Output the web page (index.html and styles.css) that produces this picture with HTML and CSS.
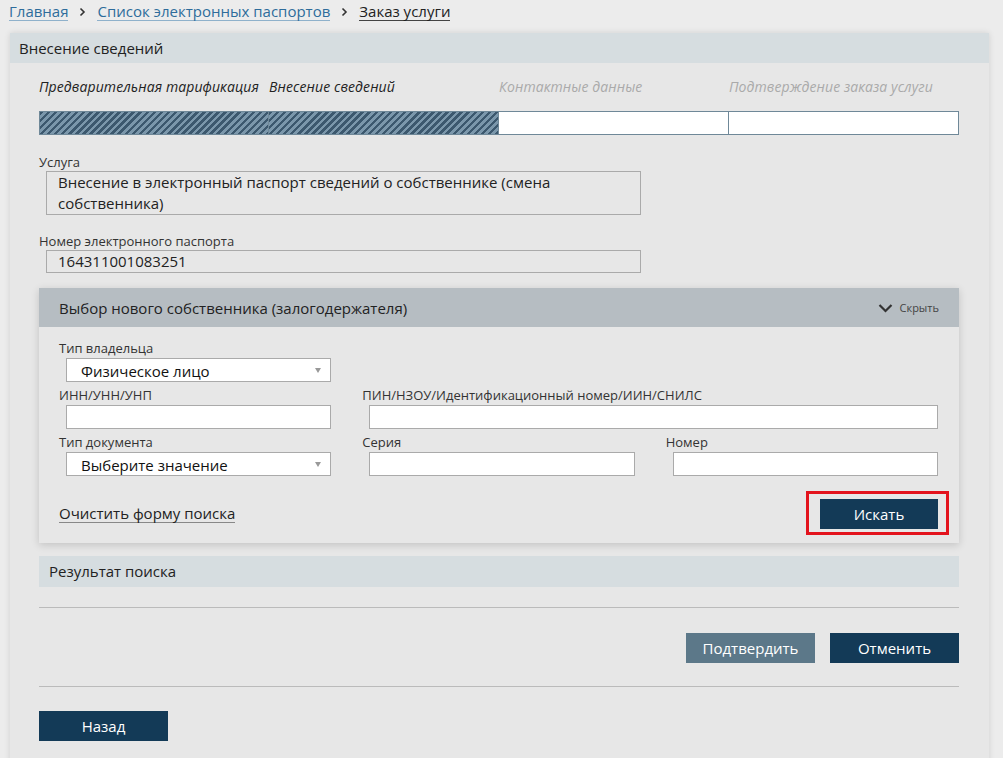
FILE: index.html
```html
<!DOCTYPE html>
<html lang="ru">
<head>
    <meta charset="UTF-8">
    <meta name="viewport" content="width=device-width, initial-scale=1.0">
    <title>Заказ услуги</title>
    <link rel="stylesheet" href="styles.css">
</head>
<body>
    <!-- Breadcrumbs -->
    <div class="breadcrumbs">
        <a href="#" class="crumb-link">Главная</a>
        <svg class="crumb-sep" width="7" height="10" viewBox="0 0 7 10"><path d="M1.5 1.5 L5 5 L1.5 8.5" fill="none" stroke="#333" stroke-width="1.6"/></svg>
        <a href="#" class="crumb-link">Список электронных паспортов</a>
        <svg class="crumb-sep" width="7" height="10" viewBox="0 0 7 10"><path d="M1.5 1.5 L5 5 L1.5 8.5" fill="none" stroke="#333" stroke-width="1.6"/></svg>
        <span class="crumb-current">Заказ услуги</span>
    </div>

    <div class="panel">
        <div class="panel-header">Внесение сведений</div>

        <div class="panel-body">
            <!-- Steps -->
            <div class="steps">
                <div class="step done">
                    <div class="step-label">Предварительная тарификация</div>
                    <div class="step-bar"></div>
                </div>
                <div class="step done">
                    <div class="step-label">Внесение сведений</div>
                    <div class="step-bar"></div>
                </div>
                <div class="step">
                    <div class="step-label">Контактные данные</div>
                    <div class="step-bar"></div>
                </div>
                <div class="step">
                    <div class="step-label">Подтверждение заказа услуги</div>
                    <div class="step-bar"></div>
                </div>
            </div>

            <!-- Readonly fields -->
            <div class="info-field">
                <div class="info-label">Услуга</div>
                <div class="info-value">Внесение в электронный паспорт сведений о собственнике (смена собственника)</div>
            </div>
            <div class="info-field">
                <div class="info-label">Номер электронного паспорта</div>
                <div class="info-value">164311001083251</div>
            </div>

            <!-- Owner search -->
            <div class="subpanel">
                <div class="subpanel-header">
                    <span>Выбор нового собственника (залогодержателя)</span>
                    <a href="#" class="toggle">
                        <svg width="15" height="10" viewBox="0 0 15 10"><path d="M1.5 2 L7.5 8 L13.5 2" fill="none" stroke="#333" stroke-width="2.2"/></svg>
                        Скрыть
                    </a>
                </div>
                <div class="subpanel-body">
                    <div class="form-grid">
                        <div class="field">
                            <label>Тип владельца</label>
                            <div class="select">Физическое лицо<span class="arrow"></span></div>
                        </div>
                        <div class="field spacer"></div>

                        <div class="field">
                            <label>ИНН/УНН/УНП</label>
                            <input type="text">
                        </div>
                        <div class="field wide">
                            <label>ПИН/НЗОУ/Идентификационный номер/ИИН/СНИЛС</label>
                            <input type="text">
                        </div>

                        <div class="field">
                            <label>Тип документа</label>
                            <div class="select">Выберите значение<span class="arrow"></span></div>
                        </div>
                        <div class="field">
                            <label>Серия</label>
                            <input type="text">
                        </div>
                        <div class="field">
                            <label>Номер</label>
                            <input type="text">
                        </div>
                    </div>

                    <div class="search-actions">
                        <a href="#" class="clear-link">Очистить форму поиска</a>
                        <div class="highlight">
                            <button class="btn btn-search">Искать</button>
                        </div>
                    </div>
                </div>
            </div>

            <div class="result-bar">Результат поиска</div>

            <hr class="divider">

            <div class="confirm-row">
                <button class="btn btn-light">Подтвердить</button>
                <button class="btn">Отменить</button>
            </div>

            <hr class="divider">

            <div class="back-row">
                <button class="btn">Назад</button>
            </div>
        </div>
    </div>
</body>
</html>
```

FILE: styles.css
```css
/* Page */
body {
    font-family: 'Open Sans', 'Noto Sans', sans-serif;
    margin: 0;
    background: #ececec;
    color: #222;
    height: 758px;
    overflow: hidden;
}
.breadcrumbs {
    display: flex;
    align-items: center;
    gap: 10px;
    padding-left: 9px;
    height: 24px;
    font-size: 15px;
}
.crumb-link {
    color: #2e6c9b;
    text-decoration: none;
    border-bottom: 1px solid #8fb1cb;
    line-height: 17px;
}
.crumb-current {
    color: #222;
    border-bottom: 1px solid #444;
    line-height: 17px;
}
.crumb-sep {
    margin: 0 1px;
}
.panel {
    margin: 9px 0 0 10px;
    width: 979px;
    background: #e7e7e7;
    box-shadow: 0 0 6px rgba(0, 0, 0, 0.12);
    min-height: 740px;
}
.panel-header {
    background: #d6dde0;
    height: 30px;
    line-height: 30px;
    padding-left: 9px;
    font-size: 15px;
}
.panel-body {
    padding: 0 30px 0 29px;
}

/* Steps */
.steps {
    display: flex;
    padding-top: 15px;
}
.step {
    flex: 1;
}
.step-label {
    font-style: italic;
    font-size: 14px;
    color: #aaa;
    height: 18px;
    line-height: 18px;
    white-space: nowrap;
    letter-spacing: 0.1px;
}
.step.done .step-label {
    color: #222;
}
.step-bar {
    margin-top: 15px;
    height: 22px;
    border: 1px solid #6f8898;
    border-left: none;
    background: #fff;
}
.step:first-child .step-bar {
    border-left: 1px solid #6f8898;
}
.step.done .step-bar {
    background: repeating-linear-gradient(135deg, #3c586e 0, #3c586e 2.5px, #7b97ab 2.5px, #7b97ab 5px);
}

/* Readonly info */
.info-field {
    margin-top: 19px;
}
.info-field + .info-field {
    margin-top: 18px;
}
.info-label {
    font-size: 13px;
    line-height: 17px;
    color: #333;
}
.info-value {
    margin-left: 7px;
    width: 595px;
    box-sizing: border-box;
    border: 1px solid #aaa;
    padding: 0 11px;
    font-size: 15px;
    line-height: 21px;
}

/* Sub panel */
.subpanel {
    margin-top: 15px;
    box-shadow: 0 2px 8px rgba(0, 0, 0, 0.16);
    background: #e7e7e7;
}
.subpanel-header {
    background: #b6bdc2;
    height: 39px;
    display: flex;
    justify-content: space-between;
    align-items: center;
    padding: 0 20px;
    font-size: 15px;
}
.toggle {
    display: flex;
    align-items: center;
    gap: 7px;
    font-size: 11px;
    color: #444;
    text-decoration: none;
}
.subpanel-body {
    padding: 13px 21px 8px 20px;
}
.form-grid {
    display: grid;
    grid-template-columns: 1fr 1fr 1fr;
    column-gap: 31px;
    row-gap: 5px;
}
.field.wide {
    grid-column: span 2;
}
.field.spacer {
    grid-column: span 2;
}
.field label {
    display: block;
    font-size: 13px;
    line-height: 17px;
    margin-bottom: 1px;
    color: #333;
}
.field input,
.select {
    display: block;
    margin-left: 7px;
    width: calc(100% - 7px);
    height: 24px;
    box-sizing: border-box;
    border: 1px solid #aaa;
    background: #fff;
    font-family: inherit;
    font-size: 15px;
}
.select {
    position: relative;
    padding-left: 14px;
    line-height: 24px;
    color: #111;
}
.arrow {
    position: absolute;
    right: 9px;
    top: 9px;
    border-left: 3px solid transparent;
    border-right: 3px solid transparent;
    border-top: 5px solid #999;
}
.search-actions {
    display: flex;
    justify-content: space-between;
    align-items: center;
    margin-top: 15px;
}
.clear-link {
    font-size: 15px;
    color: #222;
    text-decoration: none;
    border-bottom: 1px solid #888;
    line-height: 18px;
}
.highlight {
    border: 3px solid #e3131d;
    padding: 5px 8px 3px 11px;
    margin-right: -11px;
}

/* Buttons */
.btn {
    display: block;
    height: 30px;
    width: 129px;
    border: none;
    background: #133a57;
    color: #fff;
    font-family: inherit;
    font-size: 15px;
    cursor: pointer;
}
.btn-search {
    width: 118px;
}
.btn-light {
    background: #5c7889;
}
.result-bar {
    margin-top: 13px;
    background: #d6dde0;
    height: 31px;
    line-height: 31px;
    padding-left: 10px;
    font-size: 15px;
}
.divider {
    border: none;
    border-top: 1px solid #bbb;
    margin: 20px 0 0;
}
.confirm-row {
    display: flex;
    justify-content: flex-end;
    gap: 15px;
    margin: 25px 0 23px;
}
.back-row {
    margin-top: 24px;
}
```
